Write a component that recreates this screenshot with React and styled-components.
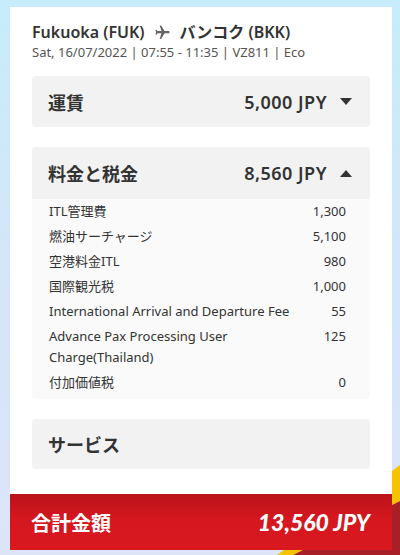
import React from 'react'
import styled, { createGlobalStyle } from 'styled-components'
import { MdFlight } from 'react-icons/md'

const GlobalStyle = createGlobalStyle`
	body {
		margin: 0;
		background: linear-gradient(180deg, #c7ecfc 0%, #d3e6fa 45%, #dde4f8 100%);
		font-family: 'Noto Sans', 'Noto Sans CJK JP', sans-serif;
		color: #333;
	}
`

const Page = styled.div`
	position: relative;
	height: 555px;
	padding: 7px 8px 0 10px;
	box-sizing: border-box;
	overflow: hidden;
`

const Decor = styled.svg`
	position: absolute;
	right: 0;
	bottom: 0;
	z-index: 0;
`

const Card = styled.div`
	position: relative;
	z-index: 1;
	width: 382px;
	background: #fff;
`

const Header = styled.div`
	padding: 14px 22px 15px;
`

const Route = styled.div`
	display: flex;
	align-items: center;
	gap: 9px;
	font-size: 16px;
	line-height: 22px;
	font-weight: 600;
	color: #333;
`

const PlaneIcon = styled(MdFlight)`
	transform: rotate(90deg);
	color: #666;
	font-size: 17px;
`

const Meta = styled.div`
	font-size: 13px;
	line-height: 18px;
	color: #555;
`

const Sections = styled.div`
	display: flex;
	flex-direction: column;
	gap: 20px;
	padding: 0 22px 25px;
`

const Section = styled.div`
	background: ${props => (props.open ? '#fafafa' : '#f2f2f2')};
	border-radius: 4px;
	overflow: hidden;
`

const SectionHead = styled.div`
	display: flex;
	align-items: center;
	justify-content: space-between;
	height: ${props => props.h || 51}px;
	padding: 0 18px 0 16px;
	background: #f2f2f2;
	font-size: 18px;
	font-weight: 700;
	color: #333;
`

const Amount = styled.div`
	display: flex;
	align-items: center;
	gap: 13px;
	font-weight: 600;
	letter-spacing: 0.5px;
`

const Caret = styled.span`
	width: 0;
	height: 0;
	border-left: 6px solid transparent;
	border-right: 6px solid transparent;
	${props =>
		props.up ? 'border-bottom: 7px solid #333;' : 'border-top: 7px solid #333;'}
`

const Rows = styled.div`
	padding: 0 24px 4px 17px;
`

const Row = styled.div`
	display: flex;
	justify-content: space-between;
	gap: 8px;
	padding: 2px 0;
	font-size: 13px;
	line-height: 21px;
	color: #333;
`

const Label = styled.span`
	max-width: 245px;
`

const Footer = styled.div`
	display: flex;
	align-items: center;
	justify-content: space-between;
	height: 56px;
	padding: 0 22px 0 21px;
	background: linear-gradient(180deg, #bb131a 0%, #d5171f 45%, #d9181f 100%);
	color: #fff;
`

const FooterLabel = styled.div`
	font-size: 20px;
	font-weight: 700;
`

const Total = styled.div`
	font-family: Lato, 'Open Sans', sans-serif;
	font-size: 23px;
	font-weight: 900;
	font-style: italic;
`

const fees = [
	['ITL管理費', '1,300'],
	['燃油サーチャージ', '5,100'],
	['空港料金ITL', '980'],
	['国際観光税', '1,000'],
	['International Arrival and Departure Fee', '55'],
	['Advance Pax Processing User Charge(Thailand)', '125'],
	['付加価値税', '0'],
]

export default function App() {
	return (
		<>
			<GlobalStyle />
			<Page>
				<Decor width="140" height="100" viewBox="0 0 140 100">
					<polygon points="140,10 17,100 33,100 140,46" fill="#f5c400" />
					<polygon points="140,46 33,100 140,100" fill="#a91f27" />
				</Decor>
				<Card>
					<Header>
						<Route>
							<span>Fukuoka (FUK)</span>
							<PlaneIcon />
							<span>バンコク (BKK)</span>
						</Route>
						<Meta>Sat, 16/07/2022 | 07:55 - 11:35 | VZ811 | Eco</Meta>
					</Header>
					<Sections>
						<Section>
							<SectionHead>
								<span>運賃</span>
								<Amount>
									5,000 JPY
									<Caret />
								</Amount>
							</SectionHead>
						</Section>
						<Section open>
							<SectionHead h={52}>
								<span>料金と税金</span>
								<Amount>
									8,560 JPY
									<Caret up />
								</Amount>
							</SectionHead>
							<Rows>
								{fees.map(([label, value]) => (
									<Row key={label}>
										<Label>{label}</Label>
										<span>{value}</span>
									</Row>
								))}
							</Rows>
						</Section>
						<Section>
							<SectionHead h={50}>
								<span>サービス</span>
							</SectionHead>
						</Section>
					</Sections>
					<Footer>
						<FooterLabel>合計金額</FooterLabel>
						<Total>13,560 JPY</Total>
					</Footer>
				</Card>
			</Page>
		</>
	)
}
